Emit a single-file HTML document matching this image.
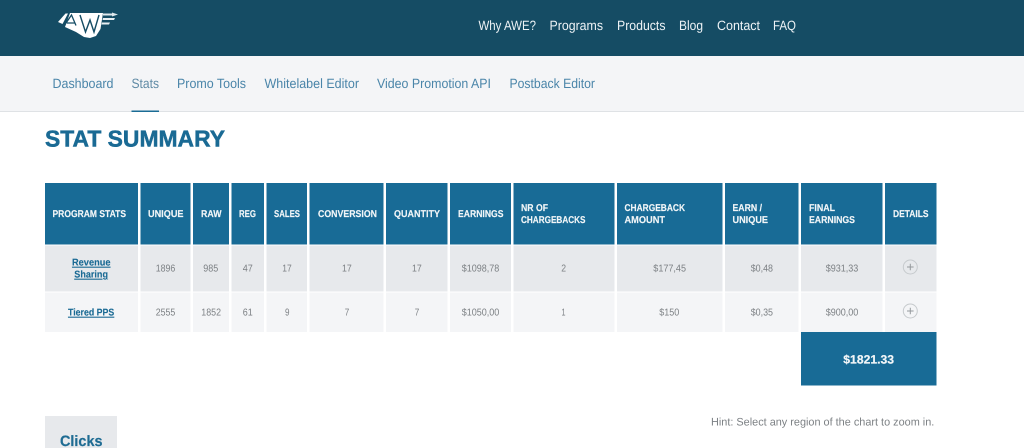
<!DOCTYPE html>
<html lang="en">
<head>
<meta charset="utf-8">
<title>Stat Summary</title>
<style>
html,body{margin:0;padding:0;width:1024px;height:448px;overflow:hidden;background:#fff}
svg{display:block;position:absolute;left:0;top:0}
text{font-family:"Liberation Sans",Arial,sans-serif;text-rendering:geometricPrecision}
.top{font-size:13.5px;fill:#eef3f6}
.sub{font-size:13.5px;fill:#4a85a9}
.th{font-size:9.8px;font-weight:700;fill:#f2f6f8;stroke:#f2f6f8;stroke-width:.15px}
.td{font-size:10px;fill:#7c8084}
.lnk{font-size:9.8px;font-weight:700;fill:#1a6a94;text-decoration:underline;stroke:#1a6a94;stroke-width:.12px}
</style>
</head>
<body>
<svg width="1024" height="448" viewBox="0 0 1024 448" xmlns="http://www.w3.org/2000/svg">
<!-- bars -->
<rect x="0" y="0" width="1024" height="56" fill="#154c64"/>
<rect x="0" y="56" width="1024" height="55" fill="#f4f5f7"/>
<rect x="0" y="111" width="1024" height="1" fill="#dfe2e5"/>
<rect x="131.5" y="110.5" width="27.5" height="1.5" fill="#1a6c95"/>

<!-- logo -->
<polygon points="70,13 103,13 100.5,29 96,36 90,38 84,37 76,32 65,27" fill="#fff"/>
<polygon points="58,22 65.500,13.500 68,13.500 62.500,24" fill="#fff"/>
<path d="M64,26 L71.500,15 L76,25.500 M67,23 H75" fill="none" stroke="#154c64" stroke-width="1.300"/>
<path d="M80,15 L85.500,32 L90,20 L94,32 L99,15" fill="none" stroke="#154c64" stroke-width="1.400"/>
<polygon points="103,13.500 112,13.500 112,12.500 118,14.500 112,16.500 112,15.500 103,15.500" fill="#dfe8ec"/>
<polygon points="103,18 115,18 114,20 102.500,20" fill="#e8eef1"/>
<polygon points="102,22.500 110,22.500 109,24.500 101.500,24.500" fill="#e8eef1"/>

<!-- top nav -->
<text class="top" x="478.5" y="30" textLength="57.500" lengthAdjust="spacingAndGlyphs">Why AWE?</text>
<text class="top" x="549.5" y="30" textLength="53.500" lengthAdjust="spacingAndGlyphs">Programs</text>
<text class="top" x="617" y="30" textLength="48.500" lengthAdjust="spacingAndGlyphs">Products</text>
<text class="top" x="679" y="30" textLength="24" lengthAdjust="spacingAndGlyphs">Blog</text>
<text class="top" x="717" y="30" textLength="43" lengthAdjust="spacingAndGlyphs">Contact</text>
<text class="top" x="773" y="30" textLength="23" lengthAdjust="spacingAndGlyphs">FAQ</text>

<!-- sub nav -->
<text class="sub" x="52.500" y="88" textLength="61" lengthAdjust="spacingAndGlyphs">Dashboard</text>
<text class="sub" x="131.500" y="88" textLength="27.500" lengthAdjust="spacingAndGlyphs" style="fill:#5f8aa5">Stats</text>
<text class="sub" x="177" y="88" textLength="69" lengthAdjust="spacingAndGlyphs">Promo Tools</text>
<text class="sub" x="264.500" y="88" textLength="94.500" lengthAdjust="spacingAndGlyphs">Whitelabel Editor</text>
<text class="sub" x="377" y="88" textLength="114" lengthAdjust="spacingAndGlyphs">Video Promotion API</text>
<text class="sub" x="509.500" y="88" textLength="85.500" lengthAdjust="spacingAndGlyphs">Postback Editor</text>

<!-- title -->
<text x="45" y="146.700" font-size="23" font-weight="700" fill="#1a6a94" stroke="#1a6a94" stroke-width=".5" textLength="180" lengthAdjust="spacingAndGlyphs">STAT SUMMARY</text>

<!-- header cells -->
<g fill="#186b96">
<rect x="45" y="183" width="93" height="61.500"/>
<rect x="140.500" y="183" width="50" height="61.500"/>
<rect x="193" y="183" width="36" height="61.500"/>
<rect x="231.500" y="183" width="32.500" height="61.500"/>
<rect x="266.500" y="183" width="40.500" height="61.500"/>
<rect x="309.500" y="183" width="74" height="61.500"/>
<rect x="386" y="183" width="61.500" height="61.500"/>
<rect x="450" y="183" width="61" height="61.500"/>
<rect x="513.500" y="183" width="101" height="61.500"/>
<rect x="617" y="183" width="105.500" height="61.500"/>
<rect x="725" y="183" width="73.500" height="61.500"/>
<rect x="801" y="183" width="81.500" height="61.500"/>
<rect x="885" y="183" width="51.500" height="61.500"/>
<rect x="801" y="332" width="135.500" height="53.500"/>
</g>

<!-- row 1 cells -->
<g fill="#e7e9ec">
<rect x="45" y="245.500" width="93" height="46"/>
<rect x="140.500" y="245.500" width="50" height="46"/>
<rect x="193" y="245.500" width="36" height="46"/>
<rect x="231.500" y="245.500" width="32.500" height="46"/>
<rect x="266.500" y="245.500" width="40.500" height="46"/>
<rect x="309.500" y="245.500" width="74" height="46"/>
<rect x="386" y="245.500" width="61.500" height="46"/>
<rect x="450" y="245.500" width="61" height="46"/>
<rect x="513.500" y="245.500" width="101" height="46"/>
<rect x="617" y="245.500" width="105.500" height="46"/>
<rect x="725" y="245.500" width="73.500" height="46"/>
<rect x="801" y="245.500" width="81.500" height="46"/>
<rect x="885" y="245.500" width="51.500" height="46"/>
</g>

<!-- row 2 cells -->
<g fill="#f4f5f7">
<rect x="45" y="292.500" width="93" height="39.500"/>
<rect x="140.500" y="292.500" width="50" height="39.500"/>
<rect x="193" y="292.500" width="36" height="39.500"/>
<rect x="231.500" y="292.500" width="32.500" height="39.500"/>
<rect x="266.500" y="292.500" width="40.500" height="39.500"/>
<rect x="309.500" y="292.500" width="74" height="39.500"/>
<rect x="386" y="292.500" width="61.500" height="39.500"/>
<rect x="450" y="292.500" width="61" height="39.500"/>
<rect x="513.500" y="292.500" width="101" height="39.500"/>
<rect x="617" y="292.500" width="105.500" height="39.500"/>
<rect x="725" y="292.500" width="73.500" height="39.500"/>
<rect x="801" y="292.500" width="81.500" height="39.500"/>
<rect x="885" y="292.500" width="51.500" height="39.500"/>
</g>

<!-- header text -->
<text class="th" x="52.500" y="217" textLength="73.500" lengthAdjust="spacingAndGlyphs">PROGRAM STATS</text>
<text class="th" x="148" y="217" textLength="35.500" lengthAdjust="spacingAndGlyphs">UNIQUE</text>
<text class="th" x="201" y="217" textLength="20.500" lengthAdjust="spacingAndGlyphs">RAW</text>
<text class="th" x="239" y="217" textLength="17" lengthAdjust="spacingAndGlyphs">REG</text>
<text class="th" x="274" y="217" textLength="26" lengthAdjust="spacingAndGlyphs">SALES</text>
<text class="th" x="318" y="217" textLength="59" lengthAdjust="spacingAndGlyphs">CONVERSION</text>
<text class="th" x="394" y="217" textLength="46" lengthAdjust="spacingAndGlyphs">QUANTITY</text>
<text class="th" x="458" y="217" textLength="45.500" lengthAdjust="spacingAndGlyphs">EARNINGS</text>
<text class="th" x="521" y="211" textLength="27" lengthAdjust="spacingAndGlyphs">NR OF</text>
<text class="th" x="521" y="223" textLength="64.500" lengthAdjust="spacingAndGlyphs">CHARGEBACKS</text>
<text class="th" x="624.500" y="211" textLength="60.500" lengthAdjust="spacingAndGlyphs">CHARGEBACK</text>
<text class="th" x="624.500" y="223" textLength="40.500" lengthAdjust="spacingAndGlyphs">AMOUNT</text>
<text class="th" x="732.500" y="211" textLength="29.500" lengthAdjust="spacingAndGlyphs">EARN /</text>
<text class="th" x="732.500" y="223" textLength="35.500" lengthAdjust="spacingAndGlyphs">UNIQUE</text>
<text class="th" x="809" y="211" textLength="26" lengthAdjust="spacingAndGlyphs">FINAL</text>
<text class="th" x="809" y="223" textLength="46" lengthAdjust="spacingAndGlyphs">EARNINGS</text>
<text class="th" x="893" y="217" textLength="35.500" lengthAdjust="spacingAndGlyphs">DETAILS</text>

<!-- row 1 text -->
<text class="lnk" x="72" y="265.700" textLength="38.500" lengthAdjust="spacingAndGlyphs">Revenue</text>
<text class="lnk" x="74.300" y="277.700" textLength="33.700" lengthAdjust="spacingAndGlyphs">Sharing</text>
<text class="td" x="155.700" y="271.700" textLength="19.600" lengthAdjust="spacingAndGlyphs">1896</text>
<text class="td" x="203.300" y="271.700" textLength="15" lengthAdjust="spacingAndGlyphs">985</text>
<text class="td" x="242.700" y="271.700" textLength="10" lengthAdjust="spacingAndGlyphs">47</text>
<text class="td" x="282.300" y="271.700" textLength="9.400" lengthAdjust="spacingAndGlyphs">17</text>
<text class="td" x="342" y="271.700" textLength="9.700" lengthAdjust="spacingAndGlyphs">17</text>
<text class="td" x="412" y="271.700" textLength="9.700" lengthAdjust="spacingAndGlyphs">17</text>
<text class="td" x="461.700" y="271.700" textLength="37.600" lengthAdjust="spacingAndGlyphs">$1098,78</text>
<text class="td" x="561.300" y="271.700" textLength="4.800" lengthAdjust="spacingAndGlyphs">2</text>
<text class="td" x="653.300" y="271.700" textLength="32.700" lengthAdjust="spacingAndGlyphs">$177,45</text>
<text class="td" x="750.700" y="271.700" textLength="22.300" lengthAdjust="spacingAndGlyphs">$0,48</text>
<text class="td" x="825.700" y="271.700" textLength="32.600" lengthAdjust="spacingAndGlyphs">$931,33</text>

<!-- row 2 text -->
<text class="lnk" x="68" y="315.700" textLength="46.300" lengthAdjust="spacingAndGlyphs">Tiered PPS</text>
<text class="td" x="155.700" y="315.700" textLength="19.600" lengthAdjust="spacingAndGlyphs">2555</text>
<text class="td" x="201.300" y="315.700" textLength="19.700" lengthAdjust="spacingAndGlyphs">1852</text>
<text class="td" x="242.700" y="315.700" textLength="10" lengthAdjust="spacingAndGlyphs">61</text>
<text class="td" x="285" y="315.700" textLength="4.500" lengthAdjust="spacingAndGlyphs">9</text>
<text class="td" x="344.700" y="315.700" textLength="4.500" lengthAdjust="spacingAndGlyphs">7</text>
<text class="td" x="414.700" y="315.700" textLength="4.500" lengthAdjust="spacingAndGlyphs">7</text>
<text class="td" x="461.700" y="315.700" textLength="37.600" lengthAdjust="spacingAndGlyphs">$1050,00</text>
<text class="td" x="561.500" y="315.700" textLength="4" lengthAdjust="spacingAndGlyphs">1</text>
<text class="td" x="659.300" y="315.700" textLength="20" lengthAdjust="spacingAndGlyphs">$150</text>
<text class="td" x="750.700" y="315.700" textLength="22.300" lengthAdjust="spacingAndGlyphs">$0,35</text>
<text class="td" x="825.700" y="315.700" textLength="32.600" lengthAdjust="spacingAndGlyphs">$900,00</text>

<!-- detail icons -->
<g fill="none" stroke="#c6cacd" stroke-width="1">
<circle cx="910.300" cy="267" r="7"/>
<circle cx="910.300" cy="311" r="7"/>
</g>
<g fill="none" stroke="#95999d" stroke-width="1">
<path d="M907,267 H913.600 M910.300,263.700 V270.300"/>
<path d="M907,311 H913.600 M910.300,307.700 V314.300"/>
</g>

<!-- total -->
<text x="843.300" y="363.300" font-size="12" font-weight="700" fill="#f2f6f8" stroke="#f2f6f8" stroke-width=".2" textLength="50.700" lengthAdjust="spacingAndGlyphs">$1821.33</text>

<!-- hint -->
<text x="711" y="425.700" font-size="11" fill="#7c8084" textLength="223.300" lengthAdjust="spacingAndGlyphs">Hint: Select any region of the chart to zoom in.</text>

<!-- clicks tab -->
<rect x="45" y="416" width="72" height="32" fill="#e7e9ec"/>
<text x="60" y="446" font-size="15" font-weight="700" fill="#1f6c93" stroke="#1f6c93" stroke-width=".2" textLength="42.500" lengthAdjust="spacingAndGlyphs">Clicks</text>
</svg>
</body>
</html>
